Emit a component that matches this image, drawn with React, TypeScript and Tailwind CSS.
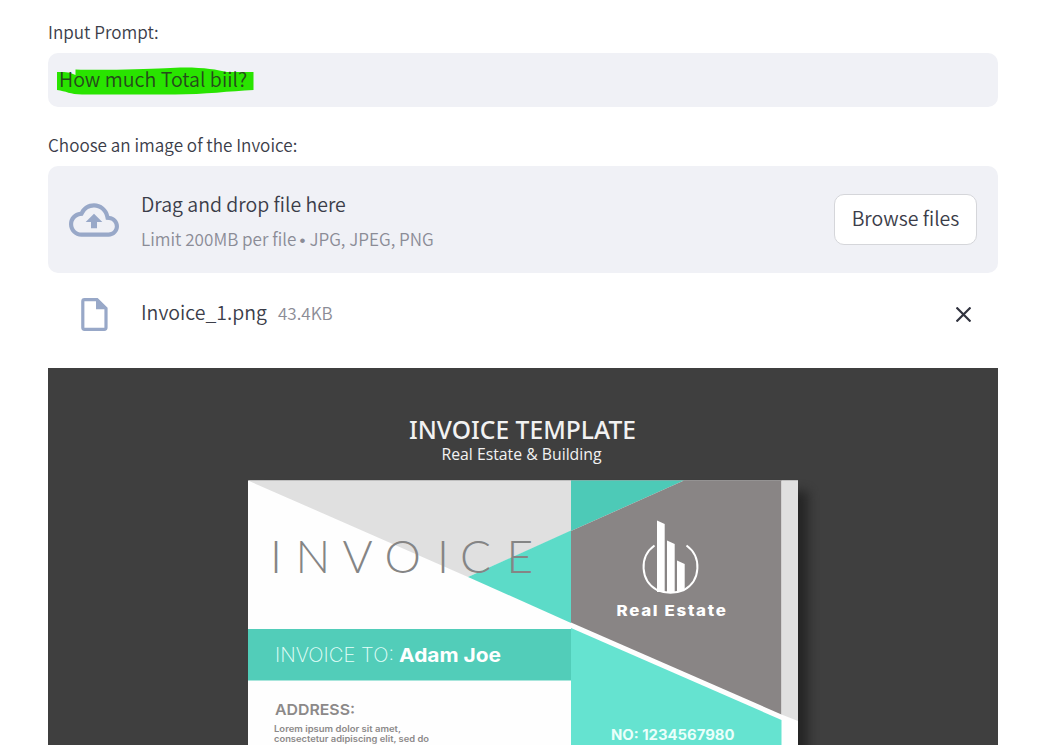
import { MdOutlineCloudUpload } from "react-icons/md";

const INVOICE_LETTERS = [
  ["I", 270], ["N", 295.5], ["V", 342.5], ["O", 384.5], ["I", 437], ["C", 460], ["E", 506.5],
] as const;

function FileIcon() {
  return (
    <svg className="h-[33px] w-[27px] shrink-0" viewBox="0 0 27 33" fill="none">
      <path d="M3.5 1.7H16L25 10.5V29.5Q25 31.3 23.2 31.3H3.5Q1.8 31.3 1.8 29.5V3.5Q1.8 1.7 3.5 1.7Z" stroke="#98a8c8" strokeWidth="3.2" />
      <path d="M15 1V11.3H26V10L17 1Z" fill="#98a8c8" />
    </svg>
  );
}

function InvoicePicture() {
  return (
    <svg className="block h-[377px] w-[950px]" viewBox="48 368 950 377">
      <defs>
        <filter id="shadow" x="-10%" y="-10%" width="120%" height="130%" colorInterpolationFilters="sRGB">
          <feGaussianBlur stdDeviation="5.5" />
        </filter>
      </defs>
      <rect x="48" y="368" width="950" height="377" fill="#3f3f3f" />
      <rect x="262" y="491" width="546" height="300" fill="#202020" opacity=".85" filter="url(#shadow)" />
      <rect x="248" y="480.500" width="550" height="300" fill="#fefefe" />
      <path d="M248 480.500H571V531L468 577Z" fill="#e0e0e0" />
      <path d="M468 577L571 530.5V623Z" fill="#5cdbc8" />
      <path d="M571 480.500H684L571 531Z" fill="#4dcab7" />
      <path d="M571 531L684 480.500H781.500V714.500L571 622.500Z" fill="#898585" />
      <path d="M781.500 480.500H798V721L781.500 714.500Z" fill="#e0e0e0" />
      <path d="M571 628L781.500 720V781H571Z" fill="#65e3d0" />
      <rect x="248" y="629" width="323" height="51.5" fill="#52cdb9" />

      <g fill="#f2f2f2">
        <text x="409" y="438.500" fontSize="24.500" fontFamily="'Noto Sans', sans-serif" fontWeight="500" textLength="227" lengthAdjust="spacingAndGlyphs">INVOICE TEMPLATE</text>
        <text x="441.500" y="460" fontSize="16" fontFamily="'Open Sans', sans-serif" fontWeight="400" textLength="160" lengthAdjust="spacingAndGlyphs">Real Estate &amp; Building</text>
      </g>
      <g fontFamily="Lato, sans-serif" fontSize="46" fontWeight="300" fill="#858585">
        {INVOICE_LETTERS.map(([letter, x]) => (
          <text key={x} x={x} y="573">{letter}</text>
        ))}
      </g>

      <g fill="#fff">
        <path d="M657 520.500L664.700 524V592H657Z" />
        <path d="M667 540.500L674.700 544V592H667Z" />
        <path d="M677 560.500L684.700 564V590L677 592Z" />
      </g>
      <path d="M654.500 545.500A26.500 26.500 0 0 0 657 590Q670.500 595.500 684 590A26.500 26.500 0 0 0 686.500 545.500" fill="none" stroke="#fff" strokeWidth="2" />

      <g fontFamily="Inter, sans-serif" fontWeight="700">
        <text x="616.500" y="615.500" fontSize="15" fontWeight="800" fill="#fff" letterSpacing="1.500" textLength="111" lengthAdjust="spacingAndGlyphs">Real Estate</text>
        <text x="611" y="739.500" fontSize="14" fontWeight="700" fill="#eafffb" textLength="123.500" lengthAdjust="spacingAndGlyphs">NO: 1234567980</text>
        <text x="275" y="661.500" fontSize="20" fontWeight="200" fill="#e5fffa" textLength="119" lengthAdjust="spacingAndGlyphs">INVOICE TO:</text>
        <text x="399" y="661.500" fontSize="19" fill="#fff" textLength="102" lengthAdjust="spacingAndGlyphs">Adam Joe</text>
        <text x="275" y="715" fontSize="15" fontWeight="600" fill="#8c8989" textLength="80" lengthAdjust="spacingAndGlyphs">ADDRESS:</text>
        <text x="274" y="732" fontSize="8.500" fontWeight="600" fill="#8c8989" textLength="127" lengthAdjust="spacingAndGlyphs">Lorem ipsum dolor sit amet,</text>
        <text x="274" y="742" fontSize="8.500" fontWeight="600" fill="#8c8989" textLength="155" lengthAdjust="spacingAndGlyphs">consectetur adipiscing elit, sed do</text>
      </g>
    </svg>
  );
}

export default function App() {
  return (
    <main className="h-[745px] overflow-hidden bg-white pr-[43px] pl-12 font-['Noto_Sans_CJK_SC',sans-serif] font-[350] text-[#3b3d49]">
      <label className="flex h-[53px] items-center pt-[10px] text-[17.1px]">Input Prompt:</label>
      <div className="flex h-[54px] items-center rounded-[10px] bg-[#f0f1f6] pb-[2px] pl-[11px] text-[19.6px]">
        <span className="relative whitespace-nowrap">
          <svg className="absolute top-1/2 -left-[2px] mt-[2px] h-[28px] w-[197px] -translate-y-1/2" viewBox="57 67 197 28">
            <path d="M57 72H64Q70 72 75.500 75V69.500C105 70.500 145 69 165 68.200C195 66 215 69 227 72H253.500V90C230 91 205 94.500 175 94.500H82C70 94.500 66 91 57 90Z" fill="#29e400" />
          </svg>
          <span className="relative text-[#264a1c]">How much Total biil?</span>
        </span>
      </div>
      <label className="flex h-[59px] items-center pt-[16px] text-[17.1px]">Choose an image of the Invoice:</label>
      <section className="flex h-[107px] items-center rounded-[10px] bg-[#f0f1f6] pr-[21px] pl-[21px]">
        <MdOutlineCloudUpload className="size-[50px] shrink-0 text-[#98a8c8]" />
        <div className="ml-[22px] flex flex-1 flex-col gap-[6px] pt-[5px]">
          <span className="text-[19.5px] leading-[29px]">Drag and drop file here</span>
          <span className="text-[17.1px] leading-[29px] text-[#8b8c96]">
            Limit 200MB per file<span className="mr-[4px] ml-[3px] inline-block font-['Liberation_Sans'] text-[17px] font-normal">•</span>JPG, JPEG, PNG
          </span>
        </div>
        <button className="h-[51px] w-[143px] rounded-[10px] border border-[#d5d6da] bg-white pb-[3px] text-[19.5px] whitespace-nowrap">Browse files</button>
      </section>
      <div className="flex h-[95px] items-center pr-[27px] pb-[13px] pl-[33px]">
        <FileIcon />
        <span className="ml-[33px] pb-[4px] text-[19.5px]">Invoice_1.png</span>
        <span className="ml-[11px] pb-[2px] text-[17.1px] text-[#8b8c96]">43.4KB</span>
        <svg className="ml-auto size-[15px]" viewBox="0 0 15 15" stroke="#31333f" strokeWidth="2.2">
          <path d="M.5.5L14.500 14.500M14.500.5L.5 14.500" />
        </svg>
      </div>
      <InvoicePicture />
    </main>
  );
}
